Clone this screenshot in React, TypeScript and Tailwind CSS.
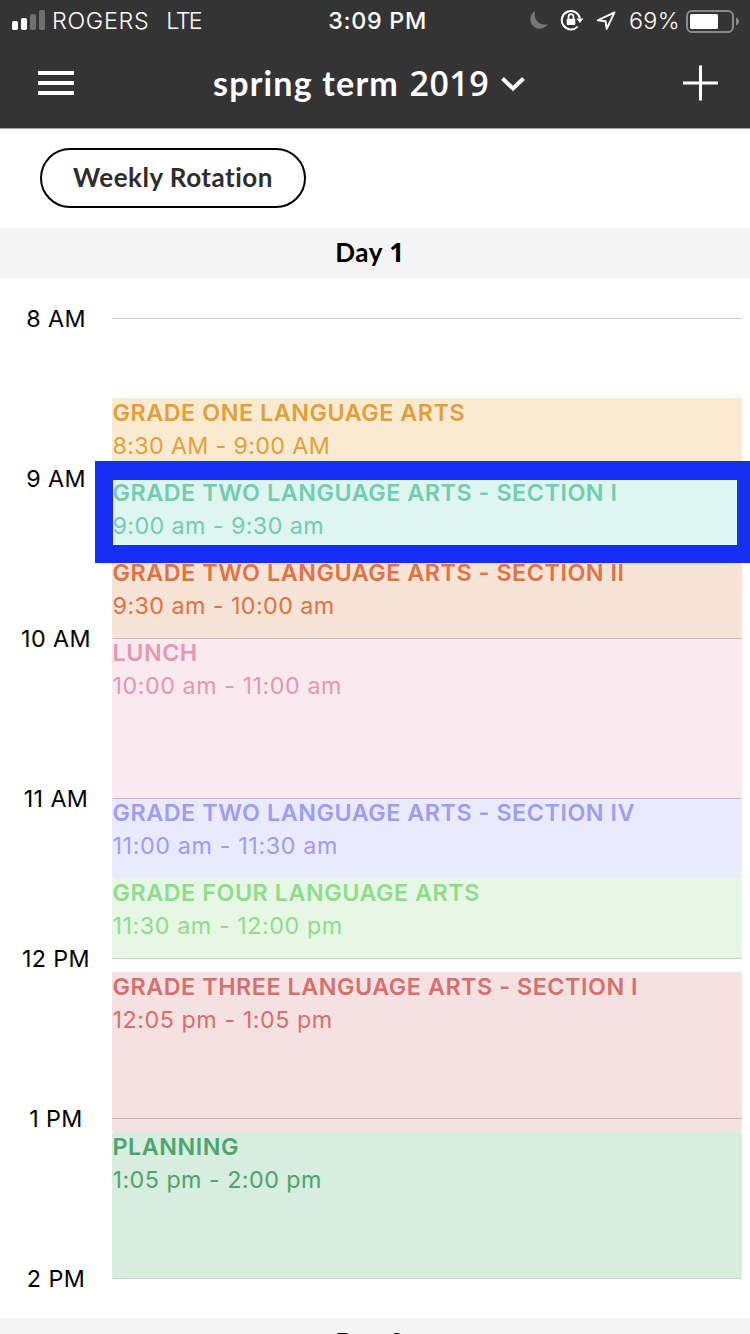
type ClassEvent = {
  title: string;
  time: string;
  box: string;
  tracking: string;
};

const events: ClassEvent[] = [
  { title: "GRADE ONE LANGUAGE ARTS", time: "8:30 AM - 9:00 AM", box: "h-[80px] bg-[#faebd0] text-[#e29f3a]", tracking: "tracking-[0.33px]" },
  { title: "GRADE TWO LANGUAGE ARTS - SECTION I", time: "9:00 am - 9:30 am", box: "h-[80px] bg-[#dff5ef] text-[#71cdb0]", tracking: "tracking-[0.4px]" },
  { title: "GRADE TWO LANGUAGE ARTS - SECTION II", time: "9:30 am - 10:00 am", box: "h-[80px] bg-[#f8e3d7] text-[#e17242]", tracking: "tracking-[0.43px]" },
  { title: "LUNCH", time: "10:00 am - 11:00 am", box: "h-[160px] bg-[#fae9ef] text-[#e498b3]", tracking: "tracking-[0.54px]" },
  { title: "GRADE TWO LANGUAGE ARTS - SECTION IV", time: "11:00 am - 11:30 am", box: "h-[80px] bg-[#ebeafc] text-[#9d9df2]", tracking: "tracking-[0.62px]" },
  { title: "GRADE FOUR LANGUAGE ARTS", time: "11:30 am - 12:00 pm", box: "h-[80px] bg-[#e6f7e5] text-[#8fdd88]", tracking: "tracking-[0.56px]" },
  { title: "GRADE THREE LANGUAGE ARTS - SECTION I", time: "12:05 pm - 1:05 pm", box: "mt-[14px] h-[160px] bg-[#f6e1e2] text-[#d5706e]", tracking: "tracking-[0.54px]" },
  { title: "PLANNING", time: "1:05 pm - 2:00 pm", box: "h-[146px] bg-[#d6ede0] text-[#4ea46d]", tracking: "tracking-[0.46px]" },
];

const hours = ["8 AM", "9 AM", "10 AM", "11 AM", "12 PM", "1 PM", "2 PM"];

function StatusBar() {
  return (
    <div className="grid h-10 grid-cols-[1fr_auto_1fr] items-center pl-3 pr-[10px] text-[23.3px] leading-10">
      <div className="flex items-center">
        <svg width="34" height="20" viewBox="0 0 34 20" fill="#fff">
          <rect x="0" y="11" width="6" height="9" rx="1.8" />
          <rect x="9" y="8" width="6" height="12" rx="1.8" />
          <rect x="18" y="4" width="6" height="16" rx="1.8" fill="#707070" />
          <rect x="27" y="0" width="6" height="20" rx="1.8" fill="#707070" />
        </svg>
        <span className="ml-[6px] h-10 pt-px font-[350] tracking-[0.7px]">ROGERS</span>
        <span className="ml-[17px] h-10 pt-px font-[350] tracking-[-1.6px]">LTE</span>
      </div>
      <div className="h-10 pl-[3px] pt-px font-[550] tracking-[0.7px]">3:09 PM</div>
      <div className="flex h-10 items-center justify-end">
        <svg width="20" height="20" viewBox="0 0 20 20">
          <path d="M6.200 1A9.400 9.400 0 1 0 18.800 14C13 16.500 3.500 11 6.200 1Z" fill="#777" />
        </svg>
        <svg className="ml-[11px]" width="24" height="22" viewBox="0 0 24 22" fill="none">
          <path d="M17.600 17.600A9.200 9.200 0 1 1 20 9.500" stroke="#fff" strokeWidth="2" />
          <path d="M16.400 9.500H23.400L19.900 14Z" fill="#fff" />
          <rect x="6.700" y="9.700" width="8.600" height="6.300" rx="1" fill="#fff" />
          <path d="M8.500 10V7.700a2.500 2.500 0 0 1 5 0V10" stroke="#fff" strokeWidth="1.700" />
        </svg>
        <svg className="ml-[12px] mt-[2px]" width="20" height="20" viewBox="0 0 20 20" fill="none">
          <path d="M18.500 1.300 1.700 9.400 9.600 10.300 10.600 18Z" stroke="#fff" strokeWidth="1.900" strokeLinejoin="round" />
        </svg>
        <span className="ml-[13px] h-10 pt-px font-[350] tracking-[0.4px]">69%</span>
        <svg className="ml-[6px] mt-px" width="54" height="24" viewBox="0 0 54 24" fill="none">
          <rect x="1" y="1.900" width="46" height="21.200" rx="5" stroke="#8a8a8a" strokeWidth="2" />
          <rect x="4" y="5" width="28" height="15" rx="1.500" fill="#fff" />
          <path d="M50 8.500c4 1.400 4 6.600 0 8Z" fill="#8a8a8a" />
        </svg>
      </div>
    </div>
  );
}

function NavBar() {
  return (
    <div className="grid h-[88px] grid-cols-[175px_1fr_36px] items-center pb-[3px] pl-[38px] pr-[32px]">
      <div className="flex w-9 flex-col gap-[6px]">
        <div className="h-1 bg-white" />
        <div className="h-1 bg-white" />
        <div className="h-1 bg-white" />
      </div>
      <div className="flex items-center">
        <h1 className="w-[287px] font-['Lato'] text-[34px] font-bold leading-10 tracking-[1.2px]">
          spring term <span className="ml-px font-['Open_Sans'] font-semibold tracking-[0.5px]">2019</span>
        </h1>
        <svg width="26" height="18" viewBox="0 0 26 18" fill="none">
          <path d="M2.500 4.500 13 14.500 23.500 4.500" stroke="#fff" strokeWidth="4" />
        </svg>
      </div>
      <svg width="36" height="36" viewBox="0 0 36 36">
        <path d="M18.500 .5V35.500M1 18H36" stroke="#fff" strokeWidth="3" />
      </svg>
    </div>
  );
}

function DayHeading({ day }: { day: number }) {
  return (
    <div className="flex h-[50px] shrink-0 justify-center bg-[#f4f4f4] pr-[10px]">
      <h2 className="font-['Lato'] text-[26px] font-bold leading-[48px] tracking-[0.6px]">
        Day <span className="font-['Open_Sans']">{day}</span>
      </h2>
    </div>
  );
}

export default function App() {
  return (
    <div className="flex h-[1334px] w-[750px] flex-col overflow-hidden whitespace-nowrap bg-white font-['Inter',sans-serif] text-black">
      <header className="h-[129px] shrink-0 border-b border-[#a0a0a0] bg-[#343434] text-white">
        <StatusBar />
        <NavBar />
      </header>

      <div className="h-[99px] shrink-0 pl-10 pt-[19px]">
        <button className="flex h-[60px] w-[266px] items-center justify-center rounded-full border-2 border-black pb-[2px] font-['Lato'] text-[26px] font-bold tracking-[0.5px] text-[#2d2d2d]">
          Weekly Rotation
        </button>
      </div>

      <DayHeading day={1} />

      <section className="relative flex h-[1040px] shrink-0">
        <div className="flex w-28 flex-col gap-32 pt-[25px] text-center text-[23.3px] leading-8 tracking-[0.4px]">
          {hours.map((hour) => (
            <div key={hour}>{hour}</div>
          ))}
        </div>
        <div className="grid w-[630px] pt-10">
          <div className="col-start-1 row-start-1 pt-20">
            {events.map((event) => (
              <article key={event.title} className={`rounded-[2px] pl-[0.5px] text-[23.3px] leading-[33px] ${event.box}`}>
                <h3 className="relative -top-[2px] font-semibold tracking-[0.55px]">{event.title}</h3>
                <p className={`relative -top-[2px] ${event.tracking}`}>{event.time}</p>
              </article>
            ))}
          </div>
          <div className="col-start-1 row-start-1 flex flex-col gap-[159px]">
            {hours.map((hour) => (
              <div key={hour} className="h-px bg-black/20" />
            ))}
          </div>
        </div>
        <div className="absolute left-[95px] top-[183px] h-[102px] w-[660px] border-[18px] border-t-[19px] border-[#1430f5]" />
      </section>

      <DayHeading day={2} />
    </div>
  );
}
